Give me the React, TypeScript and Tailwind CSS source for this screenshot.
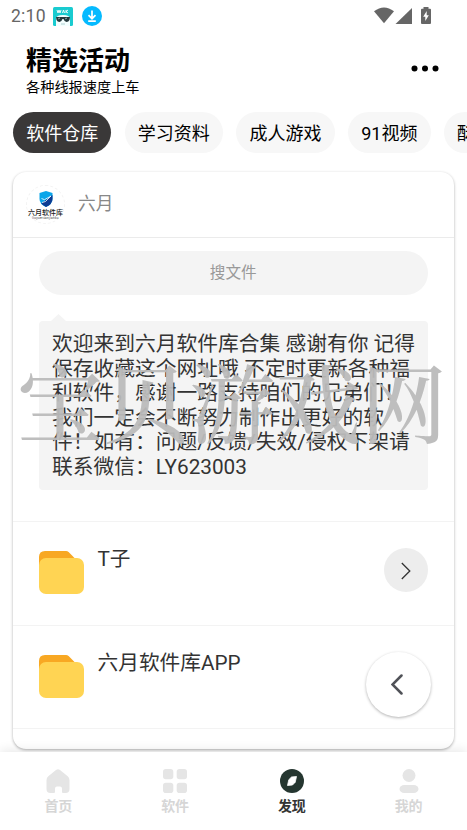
import React from 'react';

const chips = ['软件仓库', '学习资料', '成人游戏', '91视频', '酥酥资源'];

const notice = [
  '欢迎来到六月软件库合集 感谢有你 记得',
  '保存收藏这个网址哦 不定时更新各种福',
  '利软件，感谢一路支持咱们的兄弟们！',
  '我们一定会不断努力制作出更好的软',
  '件！如有：问题/反馈/失效/侵权下架请',
  '联系微信：LY623003',
];

function StatusBar() {
  return (
    <div className="flex h-8 shrink-0 items-center pl-[11px] pr-[35px] text-[#666]">
      <span className="w-[42px] text-[17.6px] leading-8 tracking-[0.2px]">2:10</span>
      <svg className="h-[19px] w-5" viewBox="0 0 20 19">
        <rect width="20" height="19" rx="1.5" fill="#19cbd0" />
        <path d="M3 19v-7q0-4 7-4t7 4v7z" fill="#f4ffff" />
        <path d="M4 3l1 3 1-3 1 3 1-3M9.5 6l1-3 1 3M13 3v3M13 4.5l2-1.5M13 4.5l2 1.5" fill="none" stroke="#fff" strokeWidth=".9" />
        <path d="M3 10h14l-.5 3q-1 2-3 2t-3-3h-1q-1 3-3 3t-3-2z" fill="#263a3e" />
        <path d="M5 12l2-1M12 12l2-1M8 17h4" stroke="#9fc5c7" strokeWidth=".8" />
      </svg>
      <svg className="ml-[9px] h-5 w-5" viewBox="0 0 20 20">
        <circle cx="10" cy="10" r="10" fill="#05baff" />
        <path d="M10 4.5v8M6.5 9.2l3.5 3.5 3.5-3.5M6.2 15.2h7.6" fill="none" stroke="#fff" strokeWidth="1.7" />
      </svg>
      <svg className="-mt-[2px] ml-auto h-[17px] w-[58px]" viewBox="0 0 58 17">
        <path d="M0 4.2Q10-3.4 20 4.2L10 16.3z" fill="#666" />
        <path d="M21.5 17L38 1v16z" fill="#666" />
        <path d="M49.5 0h5v1.7H56q1 0 1 1V16q0 1-1 1h-8q-1 0-1-1V2.7q0-1 1-1h1.5z" fill="#666" />
        <path d="M52.700 4v4.300h2.100L51.300 14V9.700h-2.100z" fill="#fff" />
      </svg>
    </div>
  );
}

function Header() {
  return (
    <header className="flex h-20 shrink-0 items-start justify-between pl-[26px] pr-7">
      <div className="pt-[13px]">
        <h1 className="text-[26px] font-bold leading-[32px] text-black">精选活动</h1>
        <p className="text-[14.2px] leading-[20px] text-black">各种线报速度上车</p>
      </div>
      <svg className="mt-[33px] h-[7px] w-7" viewBox="0 0 28 7">
        <circle cx="3.5" cy="3.5" r="3" />
        <circle cx="14" cy="3.5" r="3" />
        <circle cx="24.5" cy="3.5" r="3" />
      </svg>
    </header>
  );
}

function Chips() {
  return (
    <div className="flex h-[41px] shrink-0 gap-[13.3px] overflow-hidden pl-[13px]">
      {chips.map((label, i) => (
        <span
          key={label}
          className={
            'shrink-0 whitespace-nowrap rounded-full px-[13.2px] text-[18px] leading-[43px] ' +
            (i === 0 ? 'bg-[#3a3838] text-white' : 'bg-[#f7f7f7] text-black')
          }
        >
          {label}
        </span>
      ))}
    </div>
  );
}

function Logo() {
  return (
    <div className="flex h-[39px] w-[39px] flex-col items-center rounded-full border border-dashed border-[#f3f3f3] pt-[5px]">
      <svg className="h-4 w-[14px] shrink-0" viewBox="0 0 14 16">
        <path d="M7 0l6.5 2v6q0 5-6.5 8Q.5 13 .5 8V2z" fill="#0aa5e9" />
        <path d="M13.5 4v4q0 5-6.5 8-3-1.4-4.8-3.4z" fill="#0d3c93" />
        <path d="M2.5 7.5l3 1.2L12 5 6.5 10.5 3 11.5" fill="none" stroke="#fff" strokeWidth=".8" />
      </svg>
      <span className="mt-[2px] whitespace-nowrap text-[7px] font-medium leading-[8px] text-[#222]">六月软件库</span>
      <span className="whitespace-nowrap text-[3px] leading-[3px] tracking-[0.3px] text-[#333]">liuyueruanjianku</span>
    </div>
  );
}

function Folder() {
  return (
    <svg className="h-[43px] w-[45px]" viewBox="0 0 45 43">
      <path d="M0 14V6q0-6 6-6h21q1.5 0 2.6 1.1L37 8.500V14z" fill="#f8a823" />
      <rect y="7" width="45" height="36" rx="7" fill="#ffd453" />
    </svg>
  );
}

function Row({ name, arrow }: { name: string; arrow?: boolean }) {
  return (
    <div className="flex h-[103.700px] shrink-0 items-start border-t border-[#f3f3f3] pl-[26px] pr-[26.5px]">
      <div className="pt-[29px]">
        <Folder />
      </div>
      <span className="ml-[13.500px] mt-[24px] text-[20.7px] leading-[26px] text-[#333]">{name}</span>
      {arrow && (
        <div className="ml-auto mt-[26px] flex h-11 w-11 items-center justify-center rounded-full bg-[#ededed]">
          <svg className="mt-px h-[18px] w-[10px]" viewBox="0 0 10 18">
            <path d="M.8 1l8 8-8 8" fill="none" stroke="#333" strokeWidth="1.300" />
          </svg>
        </div>
      )}
    </div>
  );
}

function Card() {
  return (
    <section className="flex h-full flex-col overflow-hidden rounded-[13px] bg-white shadow-[0_1px_3px_rgba(0,0,0,0.32)]">
      <div className="flex h-[66px] shrink-0 items-center border-b border-[#ebebeb] pl-[13px]">
        <Logo />
        <span className="ml-[13px] text-[17.700px] text-[#888]">六月</span>
      </div>
      <div className="flex h-[283.500px] shrink-0 flex-col pl-[26px] pr-[26.5px] pt-[13px]">
        <div className="h-11 shrink-0 rounded-full bg-[#f4f4f4] text-center text-[15.600px] leading-[45px] text-[#999]">
          搜文件
        </div>
        <svg className="ml-3 mt-[19px] h-[7px] w-[15px] shrink-0" viewBox="0 0 15 7">
          <path d="M0 7L7.500 0 15 7z" fill="#f4f4f4" />
        </svg>
        <div className="h-[169px] shrink-0 rounded bg-[#f4f4f4] pl-[13px] pt-[11.500px] text-[20.75px] leading-[24.6px] text-[#333]">
          {notice.map((line) => (
            <p key={line} className="whitespace-nowrap">
              {line}
            </p>
          ))}
        </div>
      </div>
      <Row name="T子" arrow />
      <Row name="六月软件库APP" />
      <div className="grow border-t border-[#f3f3f3]" />
    </section>
  );
}

const tabs = [
  {
    label: '首页',
    color: 'text-[#d6d6d6]',
    icon: (
      <path
        d="M10 .9q2-1.500 4 0l7.700 6.300q1.800 1.500 1.800 4V20q0 4-4 4h-2.500q-1 0-1-1v-3.500q0-2-2-2h-3q-2 0-2 2V23q0 1-1 1H4.500q-4 0-4-4v-8.800q0-2.500 1.800-4z"
        fill="#e5e5e5"
      />
    ),
  },
  {
    label: '软件',
    color: 'text-[#d6d6d6]',
    icon: (
      <g fill="#e5e5e5">
        <rect width="10.300" height="10.300" rx="2.800" />
        <rect x="13.700" width="10.300" height="10.300" rx="2.800" />
        <rect y="13.700" width="10.300" height="10.300" rx="2.800" />
        <rect x="13.700" y="13.700" width="10.300" height="10.300" rx="2.800" />
      </g>
    ),
  },
  {
    label: '发现',
    color: 'text-[#333]',
    icon: (
      <g>
        <circle cx="12" cy="12" r="12" fill="#253630" />
        <path d="M16.500 7.500l-1.300 5.800-2.700 2.700-5 .5 1.300-5.800 2.700-2.700z" fill="#fff" stroke="#fff" strokeLinejoin="round" strokeWidth=".8" />
      </g>
    ),
  },
  {
    label: '我的',
    color: 'text-[#d6d6d6]',
    icon: (
      <g fill="#e5e5e5">
        <circle cx="12" cy="6.500" r="6.500" />
        <rect x="2.500" y="16" width="19" height="8" rx="4.800" ry="4" />
      </g>
    ),
  },
];

function TabBar() {
  return (
    <nav className="relative grid h-[78px] shrink-0 grid-cols-4 bg-white shadow-[0_-2px_10px_rgba(0,0,0,0.09)]">
      {tabs.map((tab) => (
        <div key={tab.label} className="flex flex-col items-center pt-[17px]">
          <svg className="h-6 w-6" viewBox="0 0 24 24">
            {tab.icon}
          </svg>
          <span className={'mt-[3px] text-[14px] font-bold leading-5 ' + tab.color}>{tab.label}</span>
        </div>
      ))}
    </nav>
  );
}

export default function App() {
  return (
    <div className="relative flex h-[830px] w-[467px] flex-col overflow-hidden bg-white font-[Roboto,'Noto_Sans_CJK_SC',sans-serif]">
      <StatusBar />
      <Header />
      <Chips />
      <main className="h-[599px] shrink-0 pb-[3px] pl-[13px] pr-[13px] pt-[18.500px]">
        <Card />
      </main>
      <TabBar />
      <div className="pointer-events-none absolute left-[17px] top-[337px] whitespace-nowrap font-['Noto_Serif_CJK_SC','Noto_Sans_CJK_SC',serif] text-[86px] font-medium leading-[126px] text-[#bbb]/95">
        宝贝游戏网
      </div>
      <button className="absolute left-[365.500px] top-[651.500px] flex h-[65px] w-[65px] items-center justify-center rounded-full bg-white shadow-[0_1px_3px_rgba(0,0,0,0.3)]">
        <svg className="-ml-0.5 h-[21px] w-3" viewBox="0 0 12 21">
          <path d="M10.500 1.500l-9 9 9 9" fill="none" stroke="#505258" strokeWidth="2.500" strokeLinecap="round" />
        </svg>
      </button>
    </div>
  );
}
